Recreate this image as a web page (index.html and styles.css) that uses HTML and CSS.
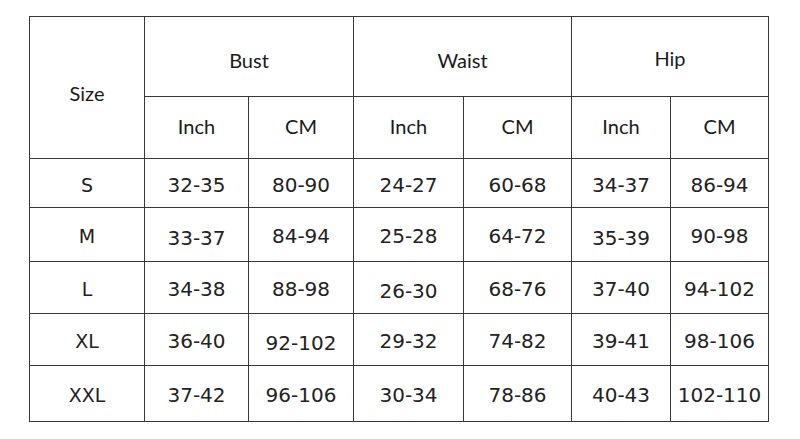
FILE: index.html
```html
<!DOCTYPE html>
<html>
<head>
<meta charset="utf-8">
<link rel="stylesheet" href="styles.css">
</head>
<body>
<div class="chart">
  <div class="cell head size">Size</div>
  <div class="cell head group">Bust</div>
  <div class="cell head group">Waist</div>
  <div class="cell head group hip">Hip</div>
  <div class="cell head unit">Inch</div>
  <div class="cell head unit">CM</div>
  <div class="cell head unit">Inch</div>
  <div class="cell head unit">CM</div>
  <div class="cell head unit">Inch</div>
  <div class="cell head unit">CM</div>

  <div class="cell label">S</div>
  <div class="cell">32-35</div><div class="cell">80-90</div>
  <div class="cell">24-27</div><div class="cell">60-68</div>
  <div class="cell">34-37</div><div class="cell">86-94</div>

  <div class="cell label">M</div>
  <div class="cell low">33-37</div><div class="cell">84-94</div>
  <div class="cell">25-28</div><div class="cell">64-72</div>
  <div class="cell low">35-39</div><div class="cell">90-98</div>

  <div class="cell label">L</div>
  <div class="cell">34-38</div><div class="cell">88-98</div>
  <div class="cell low">26-30</div><div class="cell">68-76</div>
  <div class="cell">37-40</div><div class="cell">94-102</div>

  <div class="cell label">XL</div>
  <div class="cell">36-40</div><div class="cell low">92-102</div>
  <div class="cell">29-32</div><div class="cell">74-82</div>
  <div class="cell">39-41</div><div class="cell">98-106</div>

  <div class="cell label">XXL</div>
  <div class="cell">37-42</div><div class="cell">96-106</div>
  <div class="cell">30-34</div><div class="cell">78-86</div>
  <div class="cell">40-43</div><div class="cell">102-110</div>
</div>
</body>
</html>
```
FILE: styles.css
```css
html, body {
  margin: 0;
  padding: 0;
  background: #ffffff;
}
body {
  width: 800px;
  height: 439px;
  overflow: hidden;
}
.chart {
  display: grid;
  grid-template-columns: 114px 103px 104px 109px 107px 98px 97px;
  grid-template-rows: 79px 61px 48px 53px 51px 51px 55px;
  gap: 1px;
  background: #383838;
  border: 1px solid #383838;
  width: max-content;
  margin: 16px 0 0 29px;
}
.cell {
  background: #ffffff;
  display: flex;
  align-items: center;
  justify-content: center;
  font-family: "DejaVu Sans", sans-serif;
  font-size: 20px;
  color: #222222;
  padding-top: 3px;
  box-sizing: border-box;
}
.cell.low {
  padding-top: 7px;
}
.head {
  font-family: Lato, "Noto Sans", sans-serif;
  font-size: 20px;
  color: #1a1a1a;
  padding-top: 0;
}
.unit {
  padding-bottom: 3px;
}
.size {
  grid-row: span 2;
  padding-top: 10px;
}
.group {
  grid-column: span 2;
  padding-top: 6px;
}
.group.hip {
  padding-top: 2px;
}
.label {
  font-size: 19px;
}
```
